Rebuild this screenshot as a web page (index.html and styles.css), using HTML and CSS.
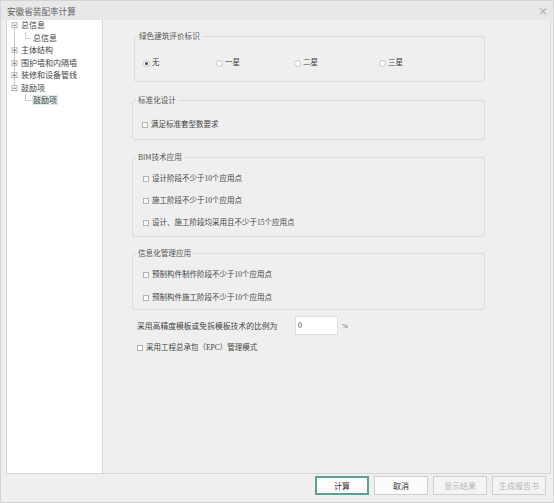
FILE: index.html
```html
<!DOCTYPE html>
<html lang="zh">
<head>
<meta charset="utf-8">
<title>安徽省装配率计算</title>
<link rel="stylesheet" href="styles.css">
</head>
<body>
<div class="window">
  <div class="titlebar">
    <span class="title">安徽省装配率计算</span>
    <span class="close">×</span>
  </div>
  <div class="main">
    <div class="tree">
      <div class="row first">
        <svg class="gut" width="14" height="12.5" viewBox="0 0 14 12.5"><path d="M7.5 8.75V12.5" class="ln"/><rect x="5" y="3.75" width="5" height="5" class="bx"/><path d="M6 6.25H9" class="mk"/></svg>
        <span class="lbl">总信息</span>
      </div>
      <div class="row">
        <svg class="gut" width="26" height="12.5" viewBox="0 0 26 12.5"><path d="M7.5 0V12.5M18.5 0V6.5H24" class="ln"/></svg>
        <span class="lbl">总信息</span>
      </div>
      <div class="row">
        <svg class="gut" width="14" height="12.5" viewBox="0 0 14 12.5"><path d="M7.5 0V3.75M7.5 8.75V12.5" class="ln"/><rect x="5" y="3.75" width="5" height="5" class="bx"/><path d="M6 6.25H9M7.5 4.75V7.75" class="mk"/></svg>
        <span class="lbl">主体结构</span>
      </div>
      <div class="row">
        <svg class="gut" width="14" height="12.5" viewBox="0 0 14 12.5"><path d="M7.5 0V3.75M7.5 8.75V12.5" class="ln"/><rect x="5" y="3.75" width="5" height="5" class="bx"/><path d="M6 6.25H9M7.5 4.75V7.75" class="mk"/></svg>
        <span class="lbl">围护墙和内隔墙</span>
      </div>
      <div class="row">
        <svg class="gut" width="14" height="12.5" viewBox="0 0 14 12.5"><path d="M7.5 0V3.75M7.5 8.75V12.5" class="ln"/><rect x="5" y="3.75" width="5" height="5" class="bx"/><path d="M6 6.25H9M7.5 4.75V7.75" class="mk"/></svg>
        <span class="lbl">装修和设备管线</span>
      </div>
      <div class="row">
        <svg class="gut" width="14" height="12.5" viewBox="0 0 14 12.5"><path d="M7.5 0V3.75" class="ln"/><rect x="5" y="3.75" width="5" height="5" class="bx"/><path d="M6 6.25H9" class="mk"/></svg>
        <span class="lbl">鼓励项</span>
      </div>
      <div class="row">
        <svg class="gut" width="26" height="12.5" viewBox="0 0 26 12.5"><path d="M18.5 0V6.5H24" class="ln"/></svg>
        <span class="lbl sel">鼓励项</span>
      </div>
    </div>
    <div class="content">
      <fieldset class="group g1">
        <legend>绿色建筑评价标识</legend>
        <div class="body radios">
          <span class="opt w1"><span class="radio on"></span>无</span>
          <span class="opt w2"><span class="radio"></span>一星</span>
          <span class="opt w3"><span class="radio"></span>二星</span>
          <span class="opt"><span class="radio"></span>三星</span>
        </div>
      </fieldset>
      <fieldset class="group g2">
        <legend>标准化设计</legend>
        <div class="body">
          <span class="opt"><span class="check"></span>满足标准套型数要求</span>
        </div>
      </fieldset>
      <fieldset class="group g3">
        <legend>BIM技术应用</legend>
        <div class="body list">
          <span class="opt"><span class="check"></span>设计阶段不少于10个应用点</span>
          <span class="opt"><span class="check"></span>施工阶段不少于10个应用点</span>
          <span class="opt"><span class="check"></span>设计、施工阶段均采用且不少于15个应用点</span>
        </div>
      </fieldset>
      <fieldset class="group g4">
        <legend>信息化管理应用</legend>
        <div class="body list">
          <span class="opt"><span class="check"></span>预制构件制作阶段不少于10个应用点</span>
          <span class="opt"><span class="check"></span>预制构件施工阶段不少于10个应用点</span>
        </div>
      </fieldset>
      <div class="ratio">
        <span class="ratio-label">采用高精度模板或免拆模板技术的比例为</span>
        <span class="input">0</span>
        <span class="pct">%</span>
      </div>
      <div class="epc">
        <span class="opt"><span class="check"></span>采用工程总承包（EPC）管理模式</span>
      </div>
    </div>
  </div>
  <div class="footer">
    <span class="btn primary">计算</span>
    <span class="btn">取消</span>
    <span class="btn disabled">显示结果</span>
    <span class="btn disabled">生成报告书</span>
  </div>
</div>
</body>
</html>
```
FILE: styles.css
```css
* { box-sizing: border-box; }
html, body { margin: 0; padding: 0; background: #efefef; }
body {
  font-family: "Liberation Serif", "Noto Sans CJK SC", sans-serif;
  font-size: 8px;
  color: #444;
}
.window {
  width: 554px;
  height: 503px;
  border: 1px solid #d4d4d4;
  background: #efefef;
  display: flex;
  flex-direction: column;
}
.titlebar {
  height: 19px;
  flex: none;
  background: #e8e8e8;
  display: flex;
  align-items: center;
  justify-content: space-between;
  padding: 0 5px 0 6px;
  font-family: "Noto Sans CJK SC", sans-serif;
}
.title { font-size: 8.6px; color: #666; }
.close { font-size: 10px; color: #999; line-height: 1; }
.main {
  flex: none;
  height: 454px;
  margin: 0 2px 0 5px;
  display: flex;
  border-bottom: 1px solid #d6d6d6;
}
.tree {
  width: 97px;
  flex: none;
  background: #fff;
  border-left: 1px solid #d6d6d6;
  border-right: 1px solid #d6d6d6;
}
.row {
  height: 12.5px;
  display: flex;
  align-items: center;
  white-space: nowrap;
}
.row.first { margin-top: -1px; }
.gut { flex: none; display: block; }
.ln { stroke: #c8c8c8; stroke-width: 1; fill: none; }
.bx { fill: #fff; stroke: #a0a0a0; stroke-width: 0.8; }
.mk { stroke: #666; stroke-width: 0.8; fill: none; }
.lbl { font-family: "Noto Sans CJK SC", sans-serif; font-size: 8px; color: #444; line-height: 10px; }
.lbl.sel { background: #dcefee; padding: 0 1px; margin-left: -1px; }
.content {
  flex: 1;
  border-right: 1px solid #dadada;
  padding: 11px 0 0 29px;
}
.group {
  margin: 0;
  padding: 0;
  width: 353px;
  border: 1px solid #dcdcdc;
  border-radius: 3px;
  min-width: 0;
}
.group legend {
  font-family: "Noto Sans CJK SC", sans-serif;
  font-size: 7.6px;
  line-height: 10px;
  color: #555;
  padding: 0 2px;
  margin-left: 3px;
}
.g1 { margin-left: 2px; width: 351px; }
.g1 legend { margin-left: 2px; }
.g2 { margin-top: 13px; }
.g3 { margin-top: 12px; }
.g4 { margin-top: 11px; }
.body { display: flex; }
.g1 .body { padding: 17px 0 13px 8px; }
.g2 .body { padding: 15px 0 9px 9px; }
.g3 .body { padding: 12px 0 8px 10px; flex-direction: column; gap: 12px; }
.g4 .body { padding: 12px 0 6px 10px; flex-direction: column; gap: 13px; }
.opt {
  display: flex;
  align-items: center;
  height: 10px;
  line-height: 10px;
  white-space: nowrap;
  color: #444;
  font-size: 7.5px;
}
.w1 { width: 73px; }
.w2 { width: 78px; }
.w3 { width: 85px; }
.radio {
  width: 7px;
  height: 7px;
  border: 1px solid #c4c4c4;
  border-radius: 50%;
  background: #fff;
  margin-right: 2px;
  display: flex;
  align-items: center;
  justify-content: center;
}
.radio.on::after {
  content: "";
  width: 3px;
  height: 3px;
  border-radius: 50%;
  background: #444;
}
.check {
  width: 6px;
  height: 6px;
  border: 1px solid #b4b4b4;
  background: #fff;
  margin-right: 3px;
  flex: none;
}
.ratio {
  display: flex;
  align-items: center;
  margin: 6px 0 0 5px;
  height: 19px;
}
.ratio-label { width: 158px; flex: none; font-family: "Noto Sans CJK SC", sans-serif; font-size: 7.8px; }
.input {
  width: 43px;
  height: 19px;
  background: #fff;
  border: 1px solid #dedede;
  padding: 0 2px;
  line-height: 17px;
  color: #444;
}
.pct { margin-left: 4px; color: #666; font-size: 7px; }
.epc { margin: 8px 0 0 5px; }
.footer {
  flex: 1;
  display: flex;
  justify-content: flex-end;
  gap: 5px;
  padding: 2px 7px 0 0;
}
.btn {
  width: 54px;
  height: 19px;
  border: 1px solid #cfcfcf;
  background: #fbfbfb;
  display: flex;
  align-items: center;
  justify-content: center;
  font-family: "Noto Sans CJK SC", sans-serif;
  font-size: 8px;
  color: #333;
}
.btn.primary { border: 2px solid #5b9f95; background: #fdfdfd; }
.btn.disabled { color: #b4b4b4; background: #f4f4f4; }
```
